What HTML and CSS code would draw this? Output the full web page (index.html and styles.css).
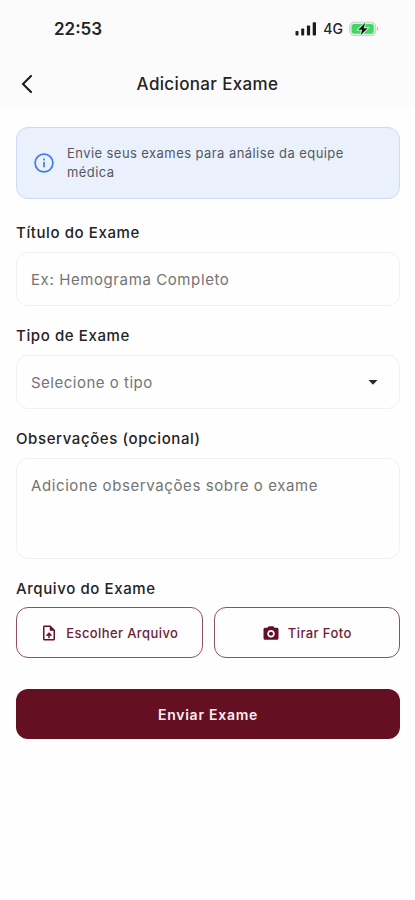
FILE: index.html
```html
<!DOCTYPE html>
<html lang="pt-BR">
<head>
  <meta charset="UTF-8" />
  <meta name="viewport" content="width=device-width, initial-scale=1.0" />
  <title>Adicionar Exame</title>
  <link rel="stylesheet" href="styles.css">
</head>
<body>
  <header class="top">
    <div class="status-bar">
      <span class="time">22:53</span>
      <div class="status-icons">
        <svg class="signal" width="22" height="14" viewBox="0 0 22 14">
          <rect x="0.5" y="9" width="3" height="4.5" rx="0.8" />
          <rect x="6.2" y="6.5" width="3" height="7" rx="0.8" />
          <rect x="11.9" y="3.5" width="3.2" height="10" rx="0.8" />
          <rect x="17.7" y="0.3" width="3.3" height="13.2" rx="0.8" />
        </svg>
        <span class="network">4G</span>
        <svg class="battery" width="30" height="16" viewBox="0 0 30 16">
          <rect x="0.7" y="1.2" width="26" height="13.4" rx="4.4" fill="#e0eee2" stroke="#c3d2c5" />
          <rect x="2.6" y="3" width="22.2" height="9.8" rx="2.8" fill="#40d765" />
          <path d="M28 5.7v4.4c1.6-.5 1.6-3.9 0-4.4z" fill="#a9bcac" />
          <path d="M16.2 1.8 9.3 8.7h3.9l-1.6 5.6 7-7.1h-4z" fill="#111" stroke="#d9f6df" stroke-width="1.8" paint-order="stroke" />
        </svg>
      </div>
    </div>
    <div class="nav-bar">
      <button class="back-btn" aria-label="Voltar">
        <svg width="12" height="20" viewBox="0 0 12 20"><path d="M10 1.9 2 10l8 8.1" /></svg>
      </button>
      <h1 class="title">Adicionar Exame</h1>
    </div>
  </header>

  <form class="form">
    <div class="info-box">
      <svg class="info-icon" width="20" height="20" viewBox="0 0 20 20">
        <circle cx="10" cy="10" r="8.9" />
        <path d="M10 9v5.2M10 5.5v2" />
      </svg>
      <p class="info-text">Envie seus exames para análise da equipe médica</p>
    </div>

    <label class="label" for="titulo">Título do Exame</label>
    <input class="field" id="titulo" type="text" placeholder="Ex: Hemograma Completo">

    <div class="label">Tipo de Exame</div>
    <button class="field select" type="button">
      <span>Selecione o tipo</span>
      <svg width="10" height="5" viewBox="0 0 10 5"><path d="M.5 0h9L5 4.8z" /></svg>
    </button>

    <label class="label" for="obs">Observações (opcional)</label>
    <textarea class="field obs" id="obs" placeholder="Adicione observações sobre o exame"></textarea>

    <div class="label label-file">Arquivo do Exame</div>
    <div class="file-row">
      <button class="outline-btn" type="button">
        <svg width="18" height="18" viewBox="0 0 24 24"><path d="M14 2H6c-1.1 0-2 .9-2 2v16c0 1.1.9 2 2 2h12c1.1 0 2-.9 2-2V8l-6-6zm4 18H6V4h7v5h5v11zM8 15.01l1.41 1.41L11 14.84V19h2v-4.16l1.59 1.59L16 15.01 12.01 11 8 15.01z" /></svg>
        <span>Escolher Arquivo</span>
      </button>
      <button class="outline-btn" type="button">
        <svg width="18" height="18" viewBox="0 0 24 24"><circle cx="12" cy="13" r="2.8" /><path d="M9 3 7.2 5H4c-1.1 0-2 .9-2 2v12c0 1.1.9 2 2 2h16c1.1 0 2-.9 2-2V7c0-1.1-.9-2-2-2h-3.200L15 3H9zm3 15c-2.800 0-5-2.200-5-5s2.200-5 5-5 5 2.200 5 5-2.200 5-5 5z" /></svg>
        <span>Tirar Foto</span>
      </button>
    </div>

    <button class="submit-btn" type="button">Enviar Exame</button>
  </form>
</body>
</html>
```
FILE: styles.css
```css
* {
  box-sizing: border-box;
}

body {
  margin: 0;
  min-height: 900px;
  background: #fefefe;
  color: #242424;
  font-family: Inter, "Liberation Sans", sans-serif;
}

button,
input,
textarea {
  font-family: inherit;
  cursor: pointer;
}

.top {
  height: 108px;
  background: #fbfbfb;
}

.status-bar {
  display: flex;
  justify-content: space-between;
  align-items: center;
  height: 57px;
  padding: 0 36px 0 54px;
}

.time {
  font-size: 17px;
  font-weight: 600;
}

.status-icons {
  display: flex;
  align-items: center;
}

.signal {
  fill: #1c1c1c;
}

.network {
  margin: 0 6px;
  font-size: 14px;
  font-weight: 500;
}

.nav-bar {
  display: grid;
  grid-template-columns: 40px 1fr 40px;
  align-items: center;
  height: 54px;
}

.back-btn {
  display: flex;
  padding: 0 0 0 21px;
  border: none;
  background: none;
}

.back-btn svg {
  fill: none;
  stroke: #1c1c1c;
  stroke-width: 2.1;
  stroke-linecap: round;
}

.title {
  margin: 0;
  text-align: center;
  font-size: 17px;
  font-weight: 500;
  letter-spacing: 0.35px;
}

.form {
  display: flex;
  flex-direction: column;
  padding: 19px 15px 0 16px;
}

.info-box {
  display: flex;
  align-items: center;
  gap: 13px;
  height: 72px;
  margin-bottom: 23px;
  padding: 0 17px;
  border: 1.5px solid #ced9f3;
  border-radius: 12px;
  background: #eaf1fd;
}

.info-icon {
  flex: none;
  fill: none;
  stroke: #3d7de4;
  stroke-width: 1.7;
}

.info-text {
  margin: 0;
  color: #55585f;
  font-size: 13px;
  line-height: 19px;
  letter-spacing: 0.43px;
}

.label {
  margin-bottom: 8px;
  font-size: 15px;
  font-weight: 500;
  line-height: 22px;
  letter-spacing: 0.6px;
}

.label-file {
  margin-bottom: 7px;
}

.field {
  height: 54px;
  margin: 0 0 19px;
  padding: 0 14px;
  border: 1px solid #f0f0f0;
  border-radius: 12px;
  background: #fefefe;
  color: #747474;
  font-size: 15px;
  letter-spacing: 0.6px;
  outline: none;
}

.field::placeholder {
  color: #747474;
}

.select {
  display: flex;
  justify-content: space-between;
  align-items: center;
  padding: 0 21px 0 14px;
  letter-spacing: 0.5px;
}

.select svg {
  fill: #2a2a2a;
}

.obs {
  height: 101px;
  padding: 17px 14px;
  line-height: 20px;
  resize: none;
}

.file-row {
  display: flex;
  gap: 11px;
  margin-bottom: 31px;
}

.outline-btn {
  display: flex;
  flex: 1;
  justify-content: center;
  align-items: center;
  gap: 8px;
  height: 51px;
  padding: 0;
  border: 1px solid #8d5262;
  border-radius: 12px;
  background: #fefefe;
  color: #6e1d36;
  font-size: 13px;
  font-weight: 500;
  letter-spacing: 0.4px;
}

.outline-btn svg {
  fill: #65102b;
}

.submit-btn {
  height: 50px;
  border: none;
  border-radius: 12px;
  background: #650f23;
  color: #f8eef0;
  font-size: 14px;
  font-weight: 600;
  letter-spacing: 0.75px;
}
```
